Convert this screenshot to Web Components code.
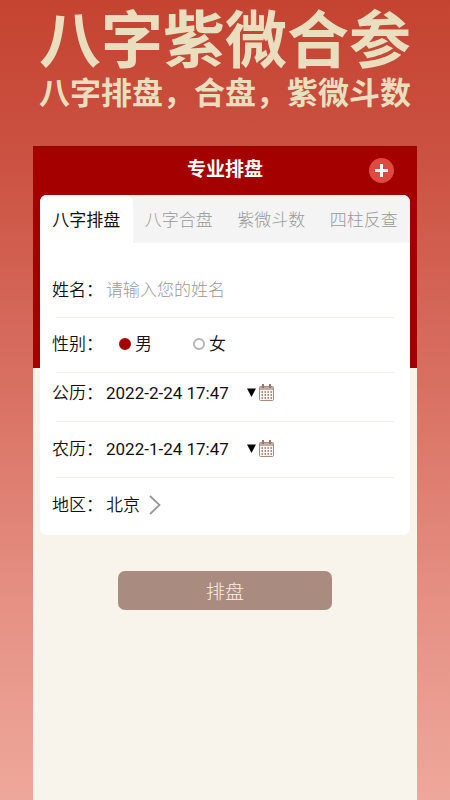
<!DOCTYPE html>
<html lang="zh-CN">
<head>
<meta charset="utf-8">
<meta name="viewport" content="width=device-width, initial-scale=1">
<title>八字紫微合参</title>
<style>
  html { min-height: 100%; background: linear-gradient(#c54331, #cb5141 19%, #d87062 48%, #e59083 75%, #eea89b); }
  body { margin: 0; min-height: 100vh; font-family: Roboto, "Noto Sans CJK SC", sans-serif; color: #111; }
</style>
</head>
<body>
<promo-page>
  <promo-banner slot="banner">
    <span slot="title">八字紫微合参</span>
    <span slot="subtitle">八字排盘，合盘，紫微斗数</span>
  </promo-banner>
  <app-screen>
    <app-header slot="header">专业排盘</app-header>
    <chart-card slot="card">
      <tab-strip slot="tabs"></tab-strip>
      <name-row></name-row>
      <gender-row></gender-row>
      <date-row label="公历：" class="compact">2022-2-24 17:47</date-row>
      <date-row label="农历：">2022-1-24 17:47</date-row>
      <region-row>北京</region-row>
    </chart-card>
    <submit-button>排盘</submit-button>
  </app-screen>
</promo-page>

<script>
const define = (name, html, setup) => customElements.define(name, class extends HTMLElement {
  constructor() {
    super();
    this.attachShadow({ mode: 'open' }).innerHTML = html;
  }
  connectedCallback() { if (setup) setup(this, this.shadowRoot); }
});

define('promo-page', `
<style>
  :host { display: flex; flex-direction: column; min-height: 100vh; }
  ::slotted(app-screen) { flex: 1; }
</style>
<slot name="banner"></slot><slot></slot>`);

define('promo-banner', `
<style>
  :host { display: block; height: 146px; box-sizing: border-box; padding-top: 8px; text-align: center;
    color: #e9dfbf; font-family: "Liberation Sans", "Noto Sans CJK SC", sans-serif; white-space: nowrap; }
  h1, p { margin: 0; }
  h1 { font-size: 62px; line-height: 68px; font-weight: 700; }
  p { font-size: 31px; line-height: 36px; font-weight: 700; }
</style>
<h1><slot name="title"></slot></h1>
<p><slot name="subtitle"></slot></p>`);

define('app-screen', `
<style>
  :host { display: block; margin: 0 33px; box-sizing: border-box; padding: 0 7px;
    border-top: 1px solid #8a0a06; background: linear-gradient(#a50000 221px, #f8f3eb 221px); }
</style>
<slot name="header"></slot><slot name="card"></slot><slot></slot>`);

define('app-header', `
<style>
  :host { display: grid; grid-template-columns: 1fr auto 1fr; align-items: center; height: 48px;
    padding: 0 16px 2px; color: #fff; box-sizing: border-box; }
  h2 { grid-column: 2; margin: 0; font-size: 19px; line-height: 24px; font-weight: 700; }
  button { justify-self: end; width: 25px; height: 25px; padding: 0; border: 0; border-radius: 50%; background: #dc4b42; }
  svg { display: block; }
</style>
<h2><slot></slot></h2>
<button type="button" aria-label="添加">
  <svg width="25" height="25" viewBox="0 0 25 25" stroke="#fff" stroke-width="3"><path d="M12.5 6v13M6 12.5h13"/></svg>
</button>`);

define('chart-card', `
<style>
  :host { display: block; border-radius: 7px; overflow: hidden; background: #fff; }
  .rows { padding: 19px 12px 2px; }
</style>
<slot name="tabs"></slot><div class="rows"><slot></slot></div>`);

define('tab-strip', `
<style>
  :host { display: grid; grid-template-columns: repeat(4, 1fr); height: 48px; background: #f4f4f4; }
  button { border: 0; padding: 0 0 2px; background: none; font: inherit; font-size: 17px; font-weight: 300; color: #999; white-space: nowrap; }
  button[aria-selected=true] { background: #fff; color: #111; font-weight: 400; border-radius: 0 7px 0 0; }
</style>
<button role="tab" aria-selected="true">八字排盘</button>
<button role="tab" aria-selected="false">八字合盘</button>
<button role="tab" aria-selected="false">紫微斗数</button>
<button role="tab" aria-selected="false">四柱反查</button>`, (host, root) => {
  host.setAttribute('role', 'tablist');
  const tabs = root.querySelectorAll('button');
  tabs.forEach(tab => tab.onclick = () => tabs.forEach(t => t.setAttribute('aria-selected', t === tab)));
});

const rowStyle = `
  :host { display: block; font-size: 17px; line-height: 24px; }
  .row { display: flex; align-items: center; height: 55px; box-sizing: border-box; padding-bottom: 2px; }
  .line { height: 1px; margin: 0 4px; background: #f3f0e9; }
  .label { width: 54px; flex: none; white-space: nowrap; font-weight: 350; }
  button { display: flex; align-items: center; border: 0; padding: 0; background: none; font: inherit; color: inherit; }`;

define('name-row', `
<style>${rowStyle}
  .row { padding-bottom: 0; }
  input { flex: 1; min-width: 0; border: 0; padding: 0; outline: 0; background: none; font: inherit; color: inherit; }
  input::placeholder { color: #999; font-weight: 300; opacity: 1; }
</style>
<div class="row"><label class="label" for="name">姓名：</label><input id="name" type="text" placeholder="请输入您的姓名"></div>
<div class="line"></div>`);

define('gender-row', `
<style>${rowStyle}
  .row { height: 54px; }
  .options { display: flex; gap: 41px; padding-left: 13px; }
  .options label { display: flex; align-items: center; gap: 4px; font-weight: 350; }
  input { appearance: none; width: 12px; height: 12px; margin: 0; border: 2px solid #b5b5b5; border-radius: 50%; }
  input:checked { border-color: #a50000; background: #a50000; }
</style>
<div class="row" role="radiogroup" aria-labelledby="g"><span class="label" id="g">性别：</span>
  <div class="options">
    <label><input type="radio" name="gender" checked>男</label>
    <label><input type="radio" name="gender">女</label>
  </div>
</div>
<div class="line"></div>`);

define('date-row', `
<style>${rowStyle}
  :host(.compact) .row { height: 48px; padding-bottom: 8px; }
  .value { width: 141px; text-align: left; white-space: nowrap; }
  svg { display: block; }
</style>
<div class="row"><span class="label" id="l"></span>
  <button type="button" aria-labelledby="l v"><span class="value" id="v"><slot></slot></span>
    <svg width="28" height="18" viewBox="0 0 28 18">
      <path d="M0 4.5h9L4.5 13z" fill="#050505"/>
      <rect x="12.500" y="2.500" width="14" height="14" rx="1" fill="#faf5f3" stroke="#a98b82"/>
      <path d="M13 3h13v3H13z" fill="#c5aaa4"/>
      <path d="M16 0v4M23 0v4" stroke="#8f7770" stroke-width="2"/>
      <path d="M14.500 8h11M14.500 11h11M14.500 14h11" stroke="#8f706b" stroke-width="1.500" stroke-dasharray="1.500 1.500"/>
    </svg>
  </button>
</div>
<div class="line"></div>`, (host, root) => { root.getElementById('l').textContent = host.getAttribute('label'); });

define('region-row', `
<style>${rowStyle}
  button { gap: 9px; font-weight: 350; }
</style>
<div class="row"><span class="label" id="l">地区：</span>
  <button type="button" aria-labelledby="l v"><span id="v"><slot></slot></span>
    <svg width="12" height="20" viewBox="0 0 12 20" fill="none" stroke="#999" stroke-width="1.8"><path d="M1 1l9.500 9L1 19"/></svg>
  </button>
</div>`);

define('submit-button', `
<style>
  :host { display: flex; justify-content: center; padding: 36px 0; }
  button { width: 58%; height: 39px; border: 0; border-radius: 7px; background: #aa8b80; color: #f8f0ea;
    font: inherit; font-size: 19px; font-weight: 300; padding: 0; }
</style>
<button type="button"><slot></slot></button>`);
</script>
</body>
</html>
